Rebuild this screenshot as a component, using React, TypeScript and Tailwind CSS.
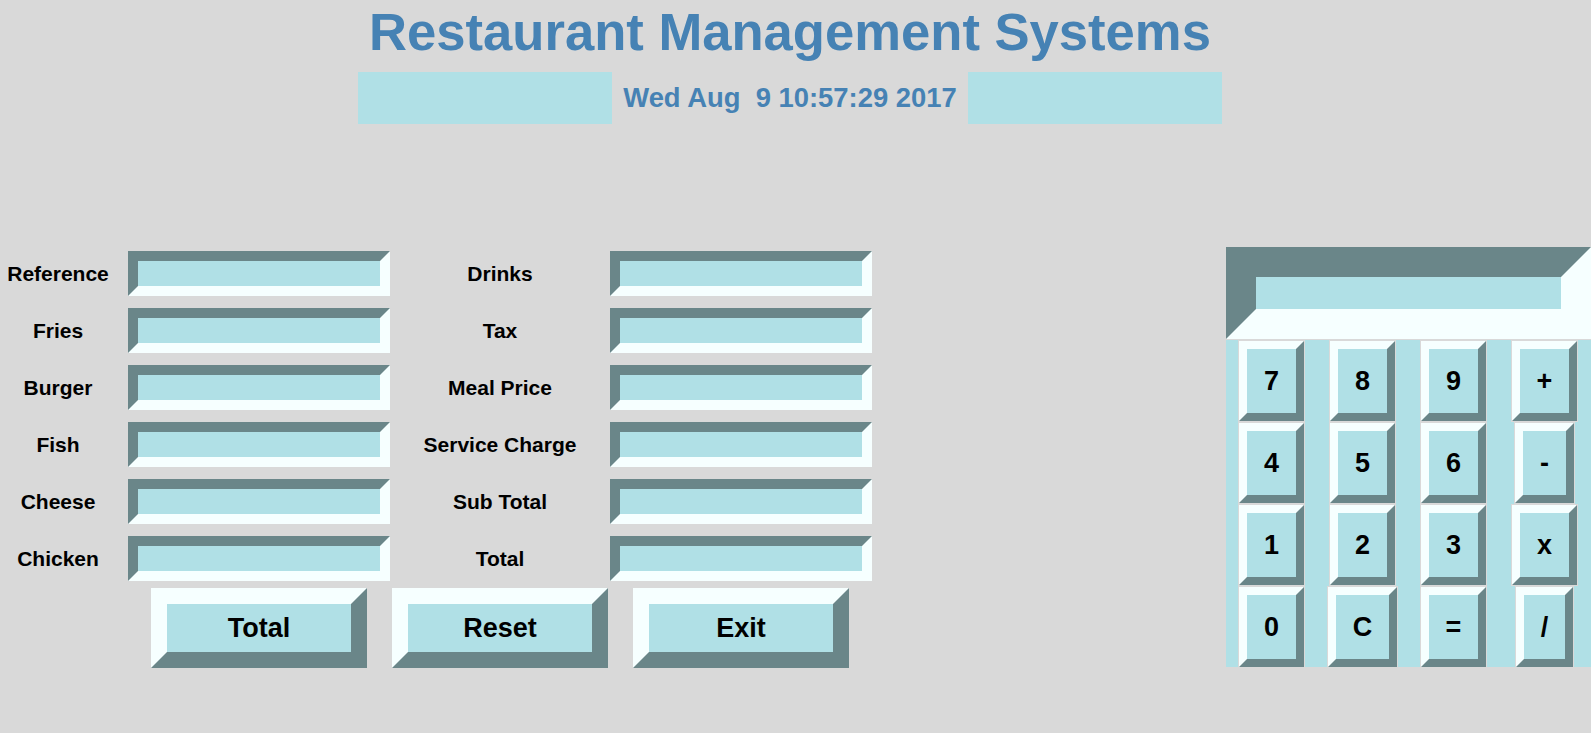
const leftFields = ["Reference", "Fries", "Burger", "Fish", "Cheese", "Chicken"];
const rightFields = ["Drinks", "Tax", "Meal Price", "Service Charge", "Sub Total", "Total"];
const calcKeys = ["7", "8", "9", "+", "4", "5", "6", "-", "1", "2", "3", "x", "0", "C", "=", "/"];

function Entry() {
  // sunken Tk entry
  return (
    <div className="w-[262px] h-[45px] border-[10px] border-t-[#6a8689] border-l-[#6a8689] border-b-[#f6ffff] border-r-[#f6ffff] bg-[#b0e0e6]" />
  );
}

function BigButton({ label }: { label: string }) {
  return (
    <button className="w-[216px] h-[80px] border-[16px] border-t-[#f6ffff] border-l-[#f6ffff] border-b-[#6a8689] border-r-[#6a8689] bg-[#b0e0e6] flex items-center justify-center text-[27px] font-bold text-black">
      {label}
    </button>
  );
}

function CalcKey({ label }: { label: string }) {
  return (
    <button className="h-[80px] px-[17px] border-[8px] border-t-[#f6ffff] border-l-[#f6ffff] border-b-[#6a8689] border-r-[#6a8689] bg-[#b0e0e6] shadow-[0_0_0_1px_#d9d9d9] flex items-center justify-center text-[27px] font-bold text-black leading-none">
      {label}
    </button>
  );
}

export default function App() {
  return (
    <div className="w-full h-[733px] bg-[#d9d9d9] overflow-hidden font-['Liberation_Sans',Arial,sans-serif]">
      {/* Header */}
      <div className="pr-[11px] pt-[6px] flex flex-col items-center">
        <h1 className="text-[52.6px] leading-none font-bold text-[#4682b4] h-[53px]">
          Restaurant Management Systems
        </h1>
        <div className="mt-[13px] flex h-[52px]">
          <div className="w-[254px] bg-[#b0e0e6]" />
          <div className="w-[356px] flex items-center justify-center text-[27.4px] font-bold text-[#4682b4] whitespace-pre">
            Wed Aug  9 10:57:29 2017
          </div>
          <div className="w-[254px] bg-[#b0e0e6]" />
        </div>
      </div>

      {/* Body */}
      <div className="mt-[121px] flex items-start">
        <div>
          {leftFields.map((name, i) => (
            <div key={name} className="h-[57px] flex items-center">
              <div className="w-[116px] text-center text-[21px] font-bold text-black">{name}</div>
              <div className="ml-[12px]">
                <Entry />
              </div>
              <div className="w-[220px] text-center text-[21px] font-bold text-black">{rightFields[i]}</div>
              <Entry />
            </div>
          ))}
          <div className="mt-px ml-[151px] flex gap-[25px]">
            <BigButton label="Total" />
            <BigButton label="Reset" />
            <BigButton label="Exit" />
          </div>
        </div>

        {/* Calculator */}
        <div className="ml-auto mt-[2px] w-[365px]">
          <div className="h-[92px] border-[30px] border-t-[#6a8689] border-l-[#6a8689] border-b-[#f6ffff] border-r-[#f6ffff] bg-[#b0e0e6]" />
          <div className="mt-px h-[327px] bg-[#b0e0e6] pt-px grid grid-cols-[repeat(4,91px)] grid-rows-[repeat(4,80px)] gap-y-[2px]">
            {calcKeys.map((k) => (
              <div key={k} className="flex justify-center">
                <CalcKey label={k} />
              </div>
            ))}
          </div>
        </div>
      </div>
    </div>
  );
}
